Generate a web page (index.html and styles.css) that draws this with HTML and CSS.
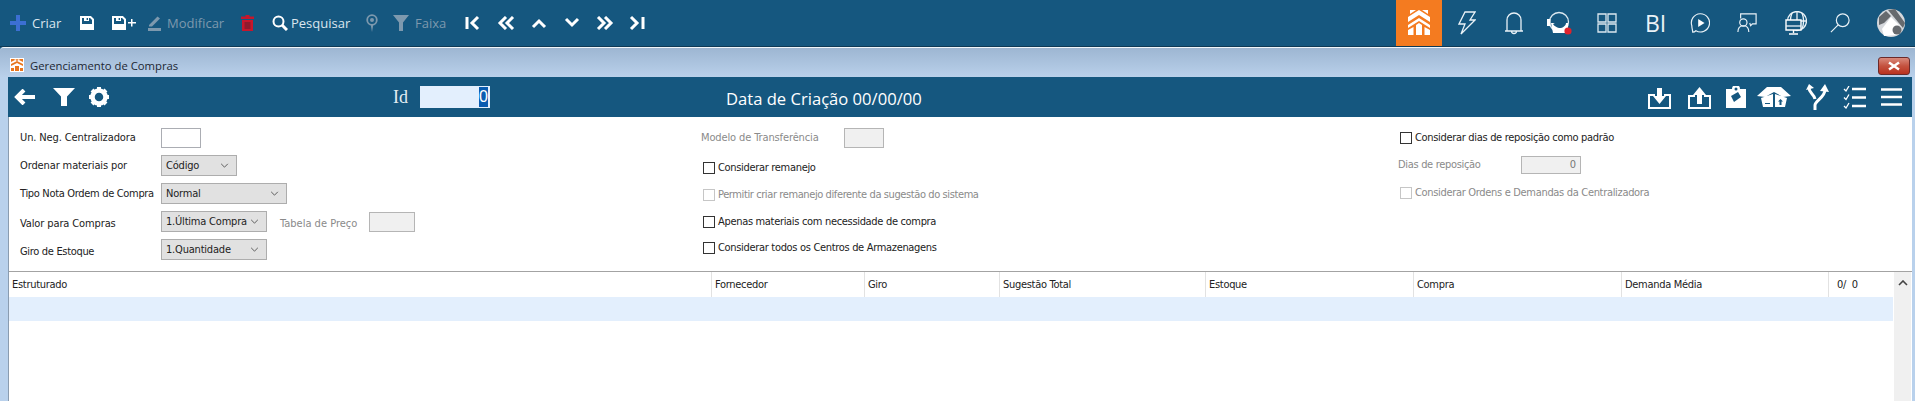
FILE: index.html
```html
<!DOCTYPE html>
<html lang="pt">
<head>
<meta charset="utf-8">
<title>Gerenciamento de Compras</title>
<link rel="stylesheet" href="styles.css">
</head>
<body>
<header class="topbar">
  <nav class="actions">
    <svg class="ic16" viewBox="0 0 16 16"><path class="blue" d="M6 0h4v6h6v4h-6v6H6v-6H0V6h6z"/></svg>
    <span class="act">Criar</span>
    <svg class="ic14" viewBox="0 0 14 14"><path class="wl" d="M1 1h9.500L13 3.500V13H1z"/><path class="wf" d="M4 1h5v4H4zM2 8h10v5H2z"/><path class="dk" d="M6.600 2h1.400v2H6.600z"/></svg>
    <svg class="ic24" viewBox="0 0 24 14"><path class="wl" d="M1 1h9.500L13 3.500V13H1z"/><path class="wf" d="M4 1h5v4H4zM2 8h10v5H2zM16 6h3V3h1.500v3H24v1.500h-3.500v3H19v-3h-3z"/><path class="dk" d="M6.600 2h1.400v2H6.600z"/></svg>
    <svg class="ic13" viewBox="0 0 13 16"><path class="gf" d="M1 10 9.500 1.500 12 3.500 4 11.500H1zM0 13h13v3H0z"/></svg>
    <span class="act off">Modificar</span>
    <svg class="ic13" viewBox="0 0 13 16"><path class="rf" d="M4.500 0h4v1.500H13v2.500H0V1.500h4.500zM1 5h11v11H1z"/><path class="rd" d="M3.500 7h6v7h-6z"/></svg>
    <svg class="ic16" viewBox="0 0 16 16"><circle class="ws" cx="6.500" cy="6.500" r="5"/><path class="ws3" d="m10 10 5 5"/></svg>
    <span class="act">Pesquisar</span>
    <svg class="ic12" viewBox="0 0 12 18"><circle class="gs" cx="6" cy="6" r="4.800"/><circle class="gf" cx="6" cy="6" r="2"/><path class="gf" d="M4.800 11h2.400L6 18z"/></svg>
    <svg class="ic16" viewBox="0 0 16 16"><path class="gf" d="M0 0h16L10 7.500V16H6V7.500z"/></svg>
    <span class="act off">Faixa</span>
    <svg class="ic16" viewBox="0 0 16 14"><path class="ws3" d="M2 1v12M13 1 7 7l6 6"/></svg>
    <svg class="ic18" viewBox="0 0 18 14"><path class="ws3" d="M9 1 3 7l6 6M16 1l-6 6 6 6"/></svg>
    <svg class="ic16" viewBox="0 0 16 14"><path class="ws3" d="m2 11 6-6 6 6"/></svg>
    <svg class="ic16" viewBox="0 0 16 14"><path class="ws3" d="m2 3 6 6 6-6"/></svg>
    <svg class="ic18" viewBox="0 0 18 14"><path class="ws3" d="m2 1 6 6-6 6M9 1l6 6-6 6"/></svg>
    <svg class="ic16" viewBox="0 0 16 14"><path class="ws3" d="m2 1 6 6-6 6M14 1v12"/></svg>
  </nav>
  <nav class="apps">
    <div class="home">
      <svg class="homelogo" viewBox="0 0 22 26"><path class="wf" d="M2 0h6L2 4zM20 0h-6l6 4zM0 7l11-7 11 7v5L11 5 0 12zM0 15l11-7 11 7v3L11 11 0 18zM8 15l3-2 3 2v10H8zM5.500 17v8H0v-5zM16.500 17v8H22v-5z"/></svg>
    </div>
    <svg class="ap-bolt" viewBox="0 0 18 24"><path class="tl" d="M7 1h10l-5 8h5L3 23l4-10H1z"/></svg>
    <svg class="ap-bell" viewBox="0 0 20 24"><path class="tl" d="M3 20V9a7 7 0 0 1 14 0v11zM1 20h18M7.500 20a2.500 2.500 0 0 0 5 0"/></svg>
    <svg class="ap26" viewBox="0 0 26 24"><circle class="tl2" cx="12" cy="11" r="9.500"/><path class="wf" d="M4 12h17v10H6zM0 8h3.500v7H0z"/><path class="bgf" d="M6 13c3-1 4-4 7-4.500 3-.5 6 1 6 3.500 0 3-4 5.500-7 5-2-.5-5-2-6-4z"/><circle class="red" cx="21" cy="20" r="3.600"/></svg>
    <svg class="ap" viewBox="0 0 20 20"><path class="tl2" d="M1 1h8v8H1zM11 1h8v8h-8zM1 11h8v8H1zM11 11h8v8h-8z"/></svg>
    <span class="bi">BI</span>
    <svg class="ap" viewBox="0 0 22 22"><path class="tl" d="M3 21c2 0 3-1 3.500-1.500A10 10 0 1 0 2 14c0 3 1 5 1 7z"/><path class="wf" d="M9 6.500 16 11l-7 4.500z"/></svg>
    <svg class="ap" viewBox="0 0 22 22"><path class="tl" d="M4 6V1h17v11h-4l-2 2-1-3M1 21c0-4 2-7 6-7s6 3 6 7"/><circle class="tl" cx="7" cy="10.500" r="4"/></svg>
    <svg class="ap-globe" viewBox="0 0 22 24"><circle class="tl" cx="12" cy="10" r="9.500"/><path class="tl" d="M12 .500v19M2.500 10h19M7 2c-2 5-2 11 0 16M17 2c2 5 2 11 0 16"/><path class="tk" d="M1 9h15v10H1z"/><path class="wl1" d="M1 9h15v10H1zM8.500 19v3M4 23h9"/><path class="tl" d="M1 15h15"/></svg>
    <svg class="ap" viewBox="0 0 22 22"><circle class="tl" cx="14" cy="8" r="7"/><path class="tl" d="M9 13 1 21"/></svg>
    <svg class="avatar" viewBox="0 0 28 28"><circle class="av1" cx="14" cy="14" r="14"/><path class="av2" d="M2 8 9 2l5 5-7 7-5 2zM11 1l7-1 10 14-2 5z"/><path class="wf" d="M14 8 24 18 21 26 7 27 5 20z"/><circle class="av2" cx="20" cy="21" r="4.500"/></svg>
  </nav>
</header>

<main class="window">
  <div class="titlebar">
    <svg class="winlogo" viewBox="0 0 14 14"><path class="wf" d="M0 0h14v14H0z"/><path class="orf" d="M1 1h3l3 2 3-2h3v3L7 1 1 4zM1 6l6-3 6 3v2L7 5 1 8zM5 8h4v5H5zM1 10h3v3H1zM10 10h3v3h-3z"/></svg>
    <span class="wintitle">Gerenciamento de Compras</span>
    <button class="close" type="button">
      <svg class="closex" viewBox="0 0 14 10"><path class="cx" d="m2 1.500 10 7M12 1.500l-10 7"/></svg>
    </button>
  </div>
  <div class="body">
    <div class="tools">
      <svg class="tool-back" viewBox="0 0 23 16"><path class="ws3l" d="M21 8H3M10 1 3 8l7 7"/></svg>
      <svg class="tool-filter" viewBox="0 0 22 18"><path class="wf" d="M0 0h22l-8 8.500V18H8V8.500z"/></svg>
      <svg class="tool-gear" viewBox="0 0 22 22"><circle class="gear" cx="11" cy="11" r="6.500"/><path class="gearteeth" d="M11 1v4M11 17v4M1 11h4M17 11h4M4 4l3 3M15 15l3 3M18 4l-3 3M7 15l-3 3"/></svg>
      <span class="idlabel">Id</span>
      <div class="idinput"><span class="idsel">0</span></div>
      <span class="created">Data de Criação 00/00/00</span>
      <div class="tools-right">
        <svg class="tr23" viewBox="0 0 23 23"><path class="ws2" d="M7 9H1v13h21V9h-6"/><path class="wf" d="M9 2h5v8h4l-6.500 8L5 10h4z"/></svg>
        <svg class="tr23" viewBox="0 0 23 23"><path class="ws2" d="M7 10H1v12h21V10h-6"/><path class="wf" d="M9 18h5v-9h4L11.500 1 5 9h4z"/></svg>
        <svg class="tr20" viewBox="0 0 20 22"><path class="wf" d="M0 3h6a4 4 0 0 1 8 0h6v19H0z"/><path class="bgf" d="m5 10 7-4 3 5-7 5z"/><circle class="bgf" cx="10" cy="3" r="1.500"/></svg>
        <svg class="tr34" viewBox="0 0 34 20"><path class="wf" d="M0 9 10 0h14l10 9-8 1-9-5-9 5zM4 11l12-4v13H6zM18 7l12 4-2 9H18z"/><path class="bgf" d="M21 14.500 23.500 12l2.500 2.500h-1.500V18h-2v-3.500zM8 16h5v1H8z"/></svg>
        <svg class="tr23h" viewBox="0 0 23 26"><path class="ws3" d="M9 26v-5c0-4 10-8 10-15M3 4c0 5 5 6 6 11"/><path class="wf" d="M14 7 19 0l4 8zM0 6l3-6 5 4z"/></svg>
        <svg class="tr23" viewBox="0 0 23 23"><path class="ws2n" d="M9 3h14M9 11.500h14M9 20h14"/><path class="ws1" d="m1 3 2 2 3-5M1 11.500l2 2 3-5M1 20l2 2 3-5"/></svg>
        <svg class="tr21" viewBox="0 0 21 18"><path class="ws2n" d="M0 1.500h21M0 9h21M0 16.500h21"/></svg>
      </div>
    </div>

    <section class="form">
      <div class="col col-a">
        <div class="row"><label class="lbl lbl-a ls-s">Un. Neg. Centralizadora</label><input class="inp w40" type="text"></div>
        <div class="row"><label class="lbl lbl-a ls-s">Ordenar materiais por</label><div class="sel w76"><span>Código</span><svg class="chev" viewBox="0 0 10 6"><path d="m1 1 4 4 4-4"/></svg></div></div>
        <div class="row"><label class="lbl lbl-a ls-t">Tipo Nota Ordem de Compra</label><div class="sel w126"><span>Normal</span><svg class="chev" viewBox="0 0 10 6"><path d="m1 1 4 4 4-4"/></svg></div></div>
        <div class="row"><label class="lbl lbl-a lbl-low ls-s">Valor para Compras</label><div class="sel w106"><span>1.Última Compra</span><svg class="chev" viewBox="0 0 10 6"><path d="m1 1 4 4 4-4"/></svg></div><label class="lbl dis lbl-tab lbl-low">Tabela de Preço</label><input class="inp dinp w46" type="text" disabled></div>
        <div class="row"><label class="lbl lbl-a lbl-low ls-t">Giro de Estoque</label><div class="sel w106"><span>1.Quantidade</span><svg class="chev" viewBox="0 0 10 6"><path d="m1 1 4 4 4-4"/></svg></div></div>
      </div>
      <div class="col col-b">
        <div class="row"><label class="lbl dis lbl-b ls-s">Modelo de Transferência</label><input class="inp dinp w40" type="text" disabled></div>
        <div class="chk chk-first"><i class="box"></i><span>Considerar remanejo</span></div>
        <div class="chk dis"><i class="box"></i><span class="ls-x">Permitir criar remanejo diferente da sugestão do sistema</span></div>
        <div class="chk"><i class="box"></i><span>Apenas materiais com necessidade de compra</span></div>
        <div class="chk chk-last"><i class="box"></i><span>Considerar todos os Centros de Armazenagens</span></div>
      </div>
      <div class="col col-c">
        <div class="chk chk-top"><i class="box"></i><span>Considerar dias de reposição como padrão</span></div>
        <div class="row row-dias"><label class="lbl dis lbl-c ls-t">Dias de reposição</label><div class="inp dinp w60 num">0</div></div>
        <div class="chk dis chk-ord"><i class="box"></i><span>Considerar Ordens e Demandas da Centralizadora</span></div>
      </div>
    </section>

    <section class="grid">
      <div class="table">
        <div class="thead">
          <span class="th">Estruturado</span>
          <span class="th">Fornecedor</span>
          <span class="th">Giro</span>
          <span class="th">Sugestão Total</span>
          <span class="th">Estoque</span>
          <span class="th">Compra</span>
          <span class="th">Demanda Média</span>
          <span class="th count">0/  0</span>
        </div>
        <div class="trow"></div>
      </div>
      <div class="scroll">
        <svg class="scrollup" viewBox="0 0 10 6"><path d="m1 5 4-4 4 4"/></svg>
      </div>
    </section>
  </div>
</main>
</body>
</html>
```

FILE: styles.css
```css
* { box-sizing: border-box; }
html, body { margin: 0; height: 100%; }
body {
  display: flex;
  flex-direction: column;
  overflow: hidden;
  background: #15577f;
  font-family: "DejaVu Sans", sans-serif;
  font-stretch: condensed;
  font-size: 11px;
  color: #222;
}
svg { display: block; fill: none; }

/* top bar */
.topbar {
  flex: none;
  height: 47px;
  display: flex;
  justify-content: space-between;
  background: #15577f;
  border-bottom: 1px solid #0e3a56;
}
.actions {
  display: grid;
  grid-template-columns: 22px 48px 32px 36px 19px 74px 31px 19px 75px 27px 22px 50px 32px 34px 33px 32px 33px auto;
  align-items: center;
  padding: 0 0 1px 10px;
}
.act {
  font-family: "Open Sans", sans-serif;
  font-stretch: normal;
  font-size: 13px;
  color: #dbe6ee;
}
.act.off { color: #7d99ae; }
.ic16 { width: 16px; height: 16px; }
.ic14 { width: 14px; height: 14px; }
.ic24 { width: 24px; height: 14px; }
.ic13 { width: 13px; height: 16px; }
.ic12 { width: 12px; height: 18px; }
.ic18 { width: 18px; height: 14px; }
.blue { fill: #3c6fd3; }
.wf { fill: #fff; }
.wl { stroke: #fff; stroke-width: 2; }
.dk { fill: #15577f; }
.gf { fill: #7d99ae; }
.gs { stroke: #7d99ae; stroke-width: 1.8; }
.rf { fill: #c6162c; }
.rd { fill: #8e1a2d; }
.ws { stroke: #fff; stroke-width: 2; }
.ws1 { stroke: #fff; stroke-width: 1.300; }
.ws2 { stroke: #fff; stroke-width: 2; }
.ws2n { stroke: #fff; stroke-width: 2.500; }
.ws3 { stroke: #fff; stroke-width: 3; }
.ws3l { stroke: #fff; stroke-width: 4; }
.tl { stroke: #eaf2f7; stroke-width: 1.300; }
.tl2 { stroke: #dbe8f0; stroke-width: 1.300; }
.wl1 { stroke: #fff; stroke-width: 1.400; }
.tk { fill: #15577f; }
.bgf { fill: #15577f; }
.red { fill: #e0232c; }

.apps {
  display: grid;
  grid-template-columns: 62px 46px 43px 50px 48px 45px 47px 48px 45px 47px 38px;
  align-items: center;
}
.home {
  width: 46px;
  height: 46px;
  background: #f47b20;
  display: flex;
  align-items: center;
  justify-content: center;
}
.homelogo { width: 22px; height: 26px; }
.ap { width: 20px; height: 22px; }
.ap-bolt { width: 18px; height: 24px; }
.ap-bell { width: 20px; height: 24px; }
.ap-globe { width: 22px; height: 24px; }
.ap26 { width: 26px; height: 24px; }
.bi {
  font-family: "Open Sans", sans-serif;
  font-stretch: normal;
  font-weight: 400;
  font-size: 23px;
  line-height: 1;
  color: #eaf2f7;
}
.avatar { width: 28px; height: 28px; }
.av1 { fill: #d5d8dc; }
.av2 { fill: #666a6e; }

/* window */
.window {
  flex: 1;
  min-height: 0;
  display: flex;
  flex-direction: column;
  border-top: 1px solid #f2f6fa;
  border-top-left-radius: 4px;
  background: #b9d1ec;
  overflow: hidden;
}
.titlebar {
  flex: none;
  height: 29px;
  display: flex;
  align-items: center;
  padding: 0 5px 0 10px;
  background: linear-gradient(#9db6d2, #b9d0ea);
}
.winlogo { width: 14px; height: 14px; margin-top: 5px; }
.wintitle {
  margin: 5px 0 0 6px;
  font-family: "Open Sans", sans-serif;
  font-stretch: normal;
  font-size: 11.300px;
  color: #1d2733;
}
.orf { fill: #e9761f; }
.close {
  margin: 7px 0 0 auto;
  width: 32px;
  height: 18px;
  padding: 0;
  display: flex;
  align-items: center;
  justify-content: center;
  border: 1px solid #6b2a2a;
  border-radius: 3px;
  background: linear-gradient(#d98a7c, #c4523f 50%, #b8321f);
}
.closex { width: 14px; height: 10px; }
.cx { stroke: #fff; stroke-width: 2.500; }

.body {
  flex: 1;
  min-height: 0;
  display: flex;
  flex-direction: column;
  margin: 0 3px 0 8px;
  background: #fff;
  border-left: 1px solid #8a9cb0;
}
.tools {
  flex: none;
  height: 40px;
  margin-left: -1px;
  display: grid;
  grid-template-columns: 39px 35px 305px 27px 306px auto 1fr;
  align-items: center;
  padding-left: 6px;
  background: #15577f;
}
.tool-back { width: 23px; height: 16px; }
.tool-filter { width: 22px; height: 18px; }
.tool-gear { width: 22px; height: 22px; }
.gear { stroke: #fff; stroke-width: 4.500; }
.gearteeth { stroke: #fff; stroke-width: 4; }
.idlabel {
  font-family: "Liberation Serif", serif;
  font-stretch: normal;
  font-size: 18px;
  color: #e3ecf2;
}
.idinput {
  width: 70px;
  height: 22px;
  display: flex;
  justify-content: flex-end;
  padding: 1px 2px 1px 0;
  background: #e3effd;
}
.idsel {
  width: 9px;
  background: #0a5cb0;
  color: #fff;
  font-family: "Liberation Sans", sans-serif;
  font-stretch: normal;
  font-size: 16px;
  line-height: 20px;
  text-align: center;
}
.created {
  padding-top: 2px;
  font-family: "Open Sans", sans-serif;
  font-stretch: normal;
  font-size: 16.600px;
  color: #fff;
}
.tools-right {
  display: grid;
  grid-template-columns: 40px 38px 31px 49px 37px 38px 21px;
  align-items: center;
  justify-content: end;
  padding-right: 10px;
}
.tr23 { width: 23px; height: 23px; }
.tr20 { width: 20px; height: 22px; }
.tr34 { width: 34px; height: 20px; }
.tr23h { width: 23px; height: 26px; }
.tr21 { width: 21px; height: 18px; }

/* form */
.form {
  flex: none;
  height: 154px;
  display: grid;
  grid-template-columns: 681px 697px 1fr;
  padding: 10px 0 0 11px;
  background: #fff;
}
.col { display: flex; flex-direction: column; }
.col-a { row-gap: 7px; }
.row { display: flex; align-items: center; height: 21px; }
.lbl { white-space: nowrap; }
.lbl-a { width: 141px; }
.lbl-b { width: 143px; }
.lbl-c { width: 123px; }
.lbl-tab { margin-left: 13px; width: 89px; }
.lbl-low { padding-top: 3px; }
.ls-s { letter-spacing: -0.120px; }
.ls-t { letter-spacing: -0.320px; }
.ls-x { letter-spacing: -0.400px; }
.dis { color: #8a8a8a; }
.inp {
  height: 20px;
  margin: 0;
  padding: 0;
  border: 1px solid #abadb3;
  background: #fff;
  font: inherit;
}
.dinp { background: #f0f0f0; border-color: #b5b5b5; }
.w40 { width: 40px; }
.w46 { width: 46px; }
.w60 { width: 60px; height: 18px; }
.num {
  padding-right: 4px;
  text-align: right;
  line-height: 16px;
  color: #777;
}
.sel {
  height: 21px;
  display: flex;
  align-items: center;
  justify-content: space-between;
  padding: 0 7px 0 4px;
  border: 1px solid #adadad;
  background: #e1e1e1;
  white-space: nowrap;
  letter-spacing: -0.200px;
}
.w76 { width: 76px; }
.w126 { width: 126px; }
.w106 { width: 106px; }
.chev { flex: none; width: 9px; height: 5px; }
.chev path { stroke: #444; stroke-width: 1; }
.scrollup path { stroke: #444; stroke-width: 1.600; }
.chk { display: flex; align-items: center; height: 27px; white-space: nowrap; letter-spacing: -0.320px; }
.chk span { margin-left: 3px; }
.box {
  flex: none;
  width: 12px;
  height: 12px;
  border: 1px solid #333;
  background: #fff;
}
.chk.dis .box { border-color: #c6c6c6; }
.col-b .chk { margin-left: 2px; }
.chk-first { margin-top: 6px; }
.chk-last { margin-top: -1px; }
.chk-top { margin: -3px 0 0 2px; }
.row-dias { margin-top: 3px; }
.chk-ord { margin: 4px 0 0 2px; }

/* grid */
.grid {
  flex: 1;
  min-height: 0;
  display: flex;
  border-top: 1px solid #a3a3a3;
  background: #fff;
}
.table { width: 1884px; }
.thead {
  height: 25px;
  display: grid;
  grid-template-columns: 703px 153px 135px 206px 208px 208px 207px 63px;
}
.th {
  padding: 6px 0 0 3px;
  border-right: 1px solid #e2e2e2;
  white-space: pre;
  color: #222;
  letter-spacing: -0.300px;
}
.th.count { padding-left: 8px; border-right: 0; }
.trow { height: 24px; background: #e3effd; }
.scroll {
  width: 17px;
  margin-left: 1px;
  padding-top: 8px;
  background: #f0f0f0;
}
.scrollup { width: 10px; height: 6px; margin: 0 auto; }
```
